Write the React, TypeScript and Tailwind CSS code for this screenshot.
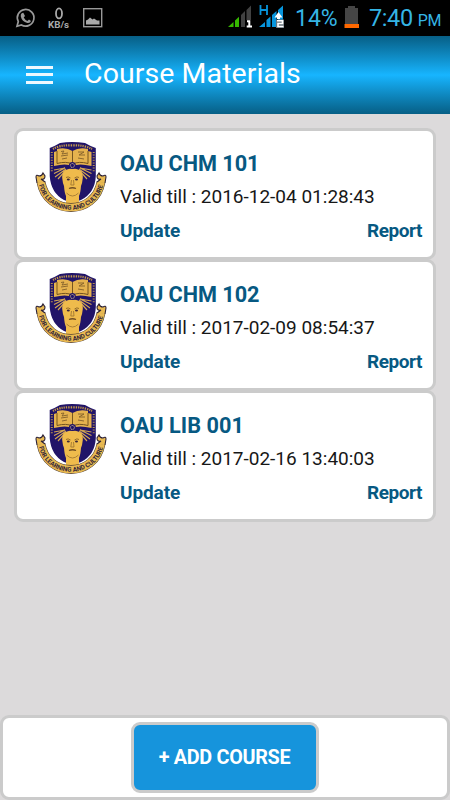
import React from 'react';

const courses = [
  { name: 'OAU CHM 101', valid: '2016-12-04 01:28:43', nameStyle: 'tracking-[-.05px]' },
  { name: 'OAU CHM 102', valid: '2017-02-09 08:54:37', nameStyle: 'tracking-[-.05px]' },
  { name: 'OAU LIB 001', valid: '2017-02-16 13:40:03', nameStyle: 'tracking-[.05px]' },
];

function Crest({ id }: { id: string }) {
  return (
    <svg className="block h-[72px] w-[72px] shrink-0" viewBox="0 0 72 72">
      <defs>
        <path id={id} d="M3.500 41C10 76.500 62 76.500 68.500 41" />
      </defs>
      <path d="M14.700 6Q20 4 25 1Q37 -.8 50 1Q55 4 60.800 6V34Q60 51 46 58Q37 62 29 58Q16 51 14.700 34Z" fill="#211468" />
      <path d="M18 7Q24 3 37 3.300Q50 3 57 7" fill="none" stroke="#c49a4b" strokeWidth="2.2" strokeDasharray="1.3 1" />
      <path d="M16.800 10V30M58.700 10V30" stroke="#b8924d" strokeWidth="2" strokeDasharray="1 1.6" />
      <path d="M19 10L22 9V7Q31 5 37.500 9Q44 5 53 7V9L56.500 10V24Q44 21 37.500 24Q31 21 19 24Z" fill="#e5b24e" />
      <path d="M37.500 9V22M22 9V21.500Q31 19 37.500 22Q44 19 53 21.500V9" fill="none" stroke="#76551f" strokeWidth="1" />
      <path d="M26 9.500L29 9L27 12L33 11M26 14L33 13M27 17L32 16M43 10L49 10L44 13L50 13M43 16L49 17" fill="none" stroke="#82602a" strokeWidth=".9" />
      <path d="M30 26L19 28M30 26L19 31.500M31 27L20 35M31 28L23 37M45 26L56.500 28M45 26L56.500 31.500M44 27L55 35M44 28L52 37" stroke="#d3a652" strokeWidth="1.15" />
      <path d="M27.200 36Q26.500 27 37.500 26.500Q48.500 27 47.800 36Q47.300 41 46 44Q45.500 51 44 54V62H31V54Q29.500 51 29 44Q27.700 41 27.200 36Z" fill="#efbb4c" />
      <circle cx="37.400" cy="23.500" r="3.500" fill="#211468" />
      <circle cx="37.400" cy="23.500" r="2" fill="none" stroke="#d9c392" strokeWidth="1" strokeDasharray="1 .6" />
      <path d="M31 35.500Q33 34 35.500 36M39.500 36Q42 34 44 35.500" fill="none" stroke="#896326" strokeWidth=".9" />
      <ellipse cx="33.300" cy="37.500" rx="1.500" ry=".9" fill="#3b2637" />
      <ellipse cx="41.500" cy="37.500" rx="1.500" ry=".9" fill="#3b2637" />
      <path d="M36.500 38L35.800 43H39L38.500 38" fill="none" stroke="#98702f" strokeWidth=".8" />
      <path d="M34 46.500Q37.500 45 41 46.500" fill="none" stroke="#704d24" strokeWidth="1.3" />
      <path d="M31.500 51Q37.500 57 43.500 51" fill="none" stroke="#a47b33" strokeWidth=".9" />
      <path d="M6 40C12 74 60 74 66 40" fill="none" stroke="#4b3930" strokeWidth="8.800" />
      <path d="M6 40C12 74 60 74 66 40" fill="none" stroke="#e8b951" strokeWidth="7.700" />
      <path d="M2 41L1 35Q1 32 4 34Q7 34 8 31L10 34Q10 38 6 37L10 40M70 41L71 35Q71 32 68 34Q65 34 64 31L62 34Q62 38 66 37L62 40" fill="#e8b951" stroke="#2b2035" strokeWidth="1.1" />
      <text fill="#342638" fontFamily="Roboto, sans-serif" fontSize="6.4" fontWeight="700">
        <textPath href={'#' + id} startOffset="2" textLength="87" lengthAdjust="spacing">FOR LEARNING AND CULTURE</textPath>
      </text>
    </svg>
  );
}

function StatusBar() {
  return (
    <div className="flex h-9 shrink-0 bg-black text-[#35b5e5]">
      <svg className="h-9 w-[110px] shrink-0" viewBox="0 0 110 36" fill="none">
        <path d="M17 26.200L18.300 21.600A8.300 8.300 0 1 1 21.400 24.900Z" stroke="#999" strokeWidth="1.7" />
        <path d="M21.700 13.200L23.300 12.800L25 16L23.700 17.500Q25 20 27.400 20.900L29 19.500L31 20.900Q30 23.500 27.300 22.900Q22 21.700 20.800 16.500Q20.500 14 21.700 13.200Z" fill="#999" />
        <ellipse cx="59" cy="13.400" rx="3" ry="5" stroke="#aaa" strokeWidth="1.8" />
        <text x="48" y="28" fill="#aaa" fontFamily="Roboto, sans-serif" fontSize="9.5" fontWeight="700" textLength="21" lengthAdjust="spacingAndGlyphs">KB/s</text>
        <rect x="83.700" y="8.700" width="18" height="18" stroke="#999" strokeWidth="1.4" />
        <path d="M86 24.500V20.500L88 19.500L90 17.500L92.500 19.500L94 18.500L97 20.500H99.500V24.500Z" fill="#aaa" />
      </svg>
      <svg className="ml-[114px] h-9 w-[66px] shrink-0" viewBox="224 0 66 36">
        <path d="M228 27L233.500 22V27Z" fill="#36b800" />
        <path d="M235 27V20.500L239 16.800V27Z" fill="#36b800" />
        <path d="M241 27V15L245 11V27ZM246.500 27V10L251 5.500V27Z" fill="#414141" />
        <path d="M246 20H251V28H246Z" fill="black" />
        <path d="M247 21.300H249.300V26.500M246.700 26.500H252" stroke="white" strokeWidth="2" fill="none" />
        <path d="M260.500 5V15M267 5V15M260.500 10H267" stroke="#0795dc" strokeWidth="1.8" />
        <path d="M259 27L265 22V27ZM266.500 27V20L270.500 16.500V27ZM272 27V15L276.500 11V27ZM278 27V10L283 5.500V27Z" fill="#0795dc" />
        <path d="M274.500 17.500L278.500 12L282.500 17.500H280V19H277V17.500Z" fill="white" />
        <path d="M276 19.500H284V28H276Z" fill="#66727a" />
        <path d="M277 20.700H282.500V23.500H278V26.500H283.500" fill="none" stroke="white" strokeWidth="1.6" />
      </svg>
      <span className="ml-[5px] w-[45px] whitespace-nowrap text-[23px] leading-[37px]">14%</span>
      <svg className="h-9 w-5 shrink-0" viewBox="340 0 20 36">
        <path d="M345 8H348V6H355V8H358V24H345Z" fill="#454545" />
        <path d="M344.500 24H359V28H344.500Z" fill="#ff6800" />
      </svg>
      <span className="ml-[9px] whitespace-nowrap text-[23.5px] leading-[37px] tracking-[-.4px]">7:40</span>
      <span className="ml-[5px] whitespace-nowrap pt-[2px] text-[16px] leading-[37px] tracking-[-.3px]">PM</span>
    </div>
  );
}

export default function App() {
  return (
    <div className="flex h-[800px] w-[450px] flex-col overflow-hidden bg-[#dcdadb] font-[Roboto,sans-serif]">
      <StatusBar />
      <header className="flex h-[78px] shrink-0 items-center bg-linear-to-b from-[#075f86] via-[#17b5ff] to-[#075f86] pl-[26px]">
        <div className="flex w-[27px] flex-col gap-[4.5px] pb-px">
          <i className="h-[3px] bg-[#edf8ff]" />
          <i className="h-[3px] bg-[#edf8ff]" />
          <i className="h-[3px] bg-[#edf8ff]" />
        </div>
        <h1 className="ml-[31px] whitespace-nowrap pb-[2px] text-[28.500px] tracking-[.08px] text-white">Course Materials</h1>
      </header>
      <main className="flex flex-1 flex-col px-[14px] pt-[14px]">
        {courses.map((course, index) => (
          <section key={course.name} className="-mb-px flex h-[132px] shrink-0 rounded-[9px] border-3 border-[#cbcbcb] bg-white pl-[18px] pr-[11px] pt-[11px]">
            <Crest id={'crest-ribbon-' + index} />
            <div className="ml-[13px] flex flex-1 flex-col">
              <h2 className={'mt-[8px] whitespace-nowrap text-[21.700px] font-bold leading-7 text-[#075982] ' + course.nameStyle}>{course.name}</h2>
              <p className="mt-[5px] whitespace-nowrap text-[19px] leading-7 text-[#171717]">Valid till : {course.valid}</p>
              <div className="mt-[6px] flex justify-between text-[19px] font-bold leading-7 text-[#075982]">
                <span className="tracking-[-.1px]">Update</span>
                <span className="tracking-[-.45px]">Report</span>
              </div>
            </div>
          </section>
        ))}
      </main>
      <footer className="flex h-[85px] shrink-0 justify-center rounded-[9px] border-3 border-[#cbcbcb] bg-white pt-[4px]">
        <button className="h-[71px] w-[188px] rounded-[9px] border-3 border-[#cbcbcb] bg-[#1694dc] pr-[1px] pt-[1px] text-[19.800px] font-bold tracking-[-.3px] text-white">+ ADD COURSE</button>
      </footer>
    </div>
  );
}
